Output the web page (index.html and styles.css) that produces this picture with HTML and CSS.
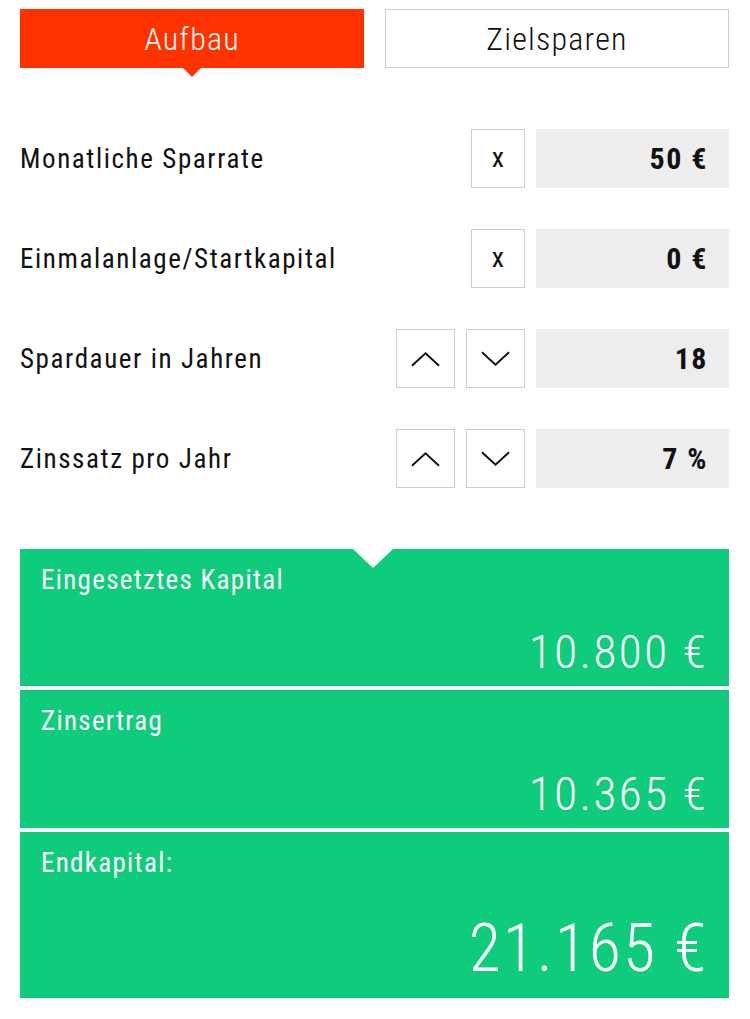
FILE: index.html
```html
<!DOCTYPE html>
<html lang="de">
<head>
  <meta charset="UTF-8">
  <meta name="viewport" content="width=device-width, initial-scale=1.0">
  <title>Sparrechner</title>
  <link rel="stylesheet" href="styles.css">
</head>
<body>
  <div class="calculator">
    <div class="tabs">
      <button class="tab tab-active">Aufbau</button>
      <button class="tab">Zielsparen</button>
    </div>

    <div class="fields">
      <div class="field">
        <span class="field-label">Monatliche Sparrate</span>
        <div class="field-controls">
          <button class="ctrl ctrl-clear">x</button>
          <div class="field-value">50 €</div>
        </div>
      </div>

      <div class="field">
        <span class="field-label">Einmalanlage/Startkapital</span>
        <div class="field-controls">
          <button class="ctrl ctrl-clear">x</button>
          <div class="field-value">0 €</div>
        </div>
      </div>

      <div class="field">
        <span class="field-label">Spardauer in Jahren</span>
        <div class="field-controls">
          <button class="ctrl">
            <svg viewBox="0 0 30 16"><path d="M1 15 15 2 29 15"/></svg>
          </button>
          <button class="ctrl">
            <svg viewBox="0 0 30 16"><path d="M1 1 15 14 29 1"/></svg>
          </button>
          <div class="field-value">18</div>
        </div>
      </div>

      <div class="field">
        <span class="field-label">Zinssatz pro Jahr</span>
        <div class="field-controls">
          <button class="ctrl">
            <svg viewBox="0 0 30 16"><path d="M1 15 15 2 29 15"/></svg>
          </button>
          <button class="ctrl">
            <svg viewBox="0 0 30 16"><path d="M1 1 15 14 29 1"/></svg>
          </button>
          <div class="field-value">7 %</div>
        </div>
      </div>
    </div>

    <div class="results">
      <div class="result result-first">
        <div class="result-label">Eingesetztes Kapital</div>
        <div class="result-value">10.800 €</div>
      </div>
      <div class="result">
        <div class="result-label">Zinsertrag</div>
        <div class="result-value">10.365 €</div>
      </div>
      <div class="result result-total">
        <div class="result-label">Endkapital:</div>
        <div class="result-value">21.165 €</div>
      </div>
    </div>
  </div>
</body>
</html>
```

FILE: styles.css
```css
:root {
  --orange: #ff3300;
  --green: #0fcc7d;
  --input-bg: #ededed;
  --border: #cccccc;
  --text: #111111;
}

body {
  margin: 0;
  padding: 0;
  background: #fff;
  color: var(--text);
  font-family: "Roboto Condensed", Roboto, "DejaVu Sans Condensed", sans-serif;
}

.calculator {
  width: 709px;
  padding: 9px 21px 0 20px;
}

.tabs {
  display: flex;
  gap: 21px;
}

.tab {
  position: relative;
  flex: 1;
  height: 59px;
  margin: 0;
  padding: 0;
  border: 1px solid var(--border);
  background: #fff;
  color: var(--text);
  font-family: inherit;
  font-size: 32px;
  font-weight: 300;
  letter-spacing: 1.2px;
  cursor: pointer;
}

.tab-active {
  border-color: var(--orange);
  background: var(--orange);
  color: #fff;
}

.tab-active::after {
  content: "";
  position: absolute;
  left: 50%;
  top: 100%;
  margin-left: -10px;
  border-left: 10px solid transparent;
  border-right: 10px solid transparent;
  border-top: 10px solid var(--orange);
}

.fields {
  display: flex;
  flex-direction: column;
  gap: 41px;
  margin-top: 61px;
}

.field {
  display: flex;
  align-items: center;
  justify-content: space-between;
  height: 59px;
}

.field-label {
  font-size: 27px;
  font-weight: 400;
  letter-spacing: 1.6px;
}

.field-controls {
  display: flex;
  gap: 11px;
  height: 100%;
}

.ctrl {
  width: 59px;
  height: 59px;
  margin: 0;
  padding: 0;
  display: flex;
  align-items: center;
  justify-content: center;
  border: 1px solid var(--border);
  background: #fff;
  color: var(--text);
  font-family: inherit;
  font-size: 28px;
  font-weight: 400;
  cursor: pointer;
}

.ctrl-clear {
  width: 54px;
  padding-bottom: 3px;
}

.ctrl svg {
  width: 29px;
  height: 16px;
  fill: none;
  stroke: var(--text);
  stroke-width: 2;
}

.field-value {
  width: 172px;
  padding-right: 21px;
  display: flex;
  align-items: center;
  justify-content: flex-end;
  background: var(--input-bg);
  font-size: 30px;
  font-weight: 700;
  letter-spacing: 1.5px;
}

.results {
  display: flex;
  flex-direction: column;
  gap: 4px;
  margin-top: 61px;
}

.result {
  position: relative;
  display: flex;
  flex-direction: column;
  justify-content: space-between;
  height: 138px;
  padding: 0 21px 0 21px;
  box-sizing: border-box;
  background: var(--green);
  color: #fff;
}

.result-first {
  height: 137px;
}

.result-first::before {
  content: "";
  position: absolute;
  left: 333px;
  top: 0;
  border-left: 20px solid transparent;
  border-right: 20px solid transparent;
  border-top: 19px solid #fff;
}

.result-label {
  padding-top: 15px;
  font-size: 27px;
  font-weight: 400;
  letter-spacing: 1.3px;
}

.result-value {
  align-self: flex-end;
  padding-bottom: 8px;
  font-size: 47px;
  font-weight: 300;
  letter-spacing: 2.5px;
  line-height: 1.1;
}

.result-total {
  height: 166px;
}

.result-total .result-value {
  padding-bottom: 12px;
  font-size: 66px;
  letter-spacing: 2px;
}
```
